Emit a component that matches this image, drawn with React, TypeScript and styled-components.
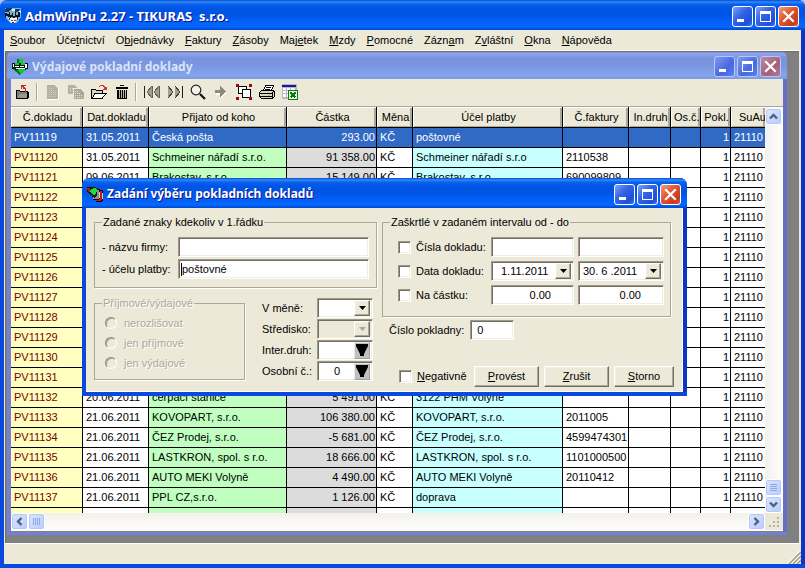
import React from "react";
import styled, { createGlobalStyle, css } from "styled-components";

const Global = createGlobalStyle`
  *, *::before, *::after { box-sizing: border-box; }
  body { margin: 0; background: #a9c4e8; overflow: hidden; }
  body, button, input, select, table { font: 11px/13px "Liberation Sans", Arial, sans-serif; color: #000; }
  button { padding: 0; margin: 0; border: 0; background: none; }
  svg { display: block; }
`;

const sunken = css`
  border: 1px solid;
  border-color: #9d9a8b #fff #fff #9d9a8b;
  box-shadow: inset 1px 1px 0 #716f64, inset -1px -1px 0 #f1efe2;
`;
const raised = css`
  border: 1px solid;
  border-color: #fff #716f64 #716f64 #fff;
  box-shadow: inset -1px -1px 0 #aca899, inset 1px 1px 0 #f1efe2;
`;

/* ---------- window frames ---------- */
const AppWindow = styled.div`
  position: relative;
  display: flex;
  flex-direction: column;
  height: 100vh;
  padding: 0 4px 4px;
  border-radius: 7px 7px 0 0;
  background: #ece9d8;
  background-clip: content-box;
  box-shadow: inset 4px -4px 0 #0a49dd, inset -4px 0 0 #0a35c8;
  overflow: hidden;
`;

const TitleBar = styled.header<{ $tone: "active" | "inactive"; $h: number }>`
  display: flex;
  align-items: center;
  gap: 4px;
  flex: none;
  height: ${(p) => p.$h}px;
  margin: 0 -4px;
  padding: 2px 6px 0 5px;
  background: ${(p) =>
    p.$tone === "active"
      ? "linear-gradient(#0848c8 0, #2f8cfc 2px, #0c62ee 4px, #0055e5 8px, #0054e3 14px, #0260f8 22px, #0468fe 27px, #0044cc 100%)"
      : "linear-gradient(#7f93e0 0, #8ea4ec 2px, #7a92dd 6px, #7b96e1 14px, #82a5ec 23px, #7f9ae4 100%)"};
`;

const TitleText = styled.h1<{ $dim?: boolean; $size: number }>`
  flex: 1;
  margin: 0;
  font: bold ${(p) => p.$size}px/20px "Noto Sans", "Open Sans", sans-serif;
  white-space: pre;
  color: ${(p) => (p.$dim ? "#d8e4f8" : "#fff")};
  text-shadow: ${(p) => (p.$dim ? "none" : "1px 1px 0 #0f1089")};
`;

const CaptionGroup = styled.div`
  display: flex;
  gap: 2px;
`;

const CaptionButton = styled.button<{ $close?: boolean; $dim?: boolean }>`
  width: 21px;
  height: 21px;
  border: 1px solid ${(p) => (p.$dim ? "#b8c8f4" : "#fff")};
  border-radius: 3px;
  background: ${(p) =>
    p.$close
      ? p.$dim
        ? "linear-gradient(135deg, #b88aa6, #a8607a 60%, #b07890)"
        : "linear-gradient(135deg, #f0a088 0, #e25a34 40%, #c8391a 80%, #d8603a 100%)"
      : p.$dim
        ? "linear-gradient(135deg, #7c9af0, #4868e0 60%, #5a80ee)"
        : "linear-gradient(135deg, #7ca4f8 0, #3664e8 40%, #1f4fd8 80%, #3a78f0 100%)"};
`;

function Caption({ dim }: { dim?: boolean }) {
  return (
    <CaptionGroup>
      <CaptionButton type="button" $dim={dim} aria-label="Minimalizovat">
        <svg width="19" height="19"><path d="M4 12h7v3H4z" fill="#fff" /></svg>
      </CaptionButton>
      <CaptionButton type="button" $dim={dim} aria-label="Maximalizovat">
        <svg width="19" height="19"><path fillRule="evenodd" d="M4 4h11v11H4zM5 7h9v7H5z" fill="#fff" /></svg>
      </CaptionButton>
      <CaptionButton type="button" $dim={dim} $close aria-label="Zavřít">
        <svg width="19" height="19"><path d="M5 5l9 9M14 5l-9 9" stroke="#fff" strokeWidth="2.2" strokeLinecap="square" /></svg>
      </CaptionButton>
    </CaptionGroup>
  );
}

/* ---------- menu, client area, status ---------- */
const MenuBar = styled.nav`
  display: flex;
  flex: none;
  height: 21px;
  padding-left: 1px;
  border-bottom: 1px solid #fff;
`;
const MenuItem = styled.button`
  padding: 0 6px 0 5px;
`;

const Client = styled.main`
  flex: 1;
  min-height: 0;
  display: flex;
  margin: 0 2px 0 1px;
  padding: 0 12px 8px 1px;
  border: 1px solid #716f64;
  border-right: 0;
  border-bottom: 0;
  background: #808080;
`;

const StatusBar = styled.footer`
  display: flex;
  justify-content: flex-end;
  align-items: flex-end;
  flex: none;
  height: 21px;
  border-top: 1px solid #fff;
`;

const ChildWindow = styled.section`
  flex: 1;
  min-width: 0;
  display: flex;
  flex-direction: column;
  padding: 0 4px 4px;
  border-radius: 5px 5px 0 0;
  background: #ece9d8;
  background-clip: content-box;
  box-shadow: inset 4px -3px 0 #7480d4, inset -4px 0 0 #6470c8;
  overflow: hidden;
`;

const Toolbar = styled.div`
  display: flex;
  align-items: center;
  flex: none;
  height: 28px;
  padding-bottom: 1px;
  border-bottom: 1px solid #aca899;
`;
const ToolButton = styled.button`
  display: grid;
  place-items: center;
  width: 23px;
  height: 24px;
`;
const Divider = styled.span`
  width: 2px;
  height: 18px;
  margin: 0 3px 0 2px;
  border-left: 1px solid #aca899;
  border-right: 1px solid #fff;
`;

/* ---------- grid ---------- */
const GridArea = styled.div`
  flex: 1;
  min-height: 0;
  display: flex;
`;
const GridView = styled.div`
  flex: 1;
  min-width: 0;
  overflow: hidden;
  background: #fff;
`;
const Table = styled.table`
  width: 100%;
  min-width: 754px;
  table-layout: fixed;
  border-collapse: separate;
  border-spacing: 0;
`;
const Col = styled.col<{ $w?: number }>`
  width: ${(p) => (p.$w ? `${p.$w}px` : "auto")};
`;
const HeadCell = styled.th<{ $last?: boolean }>`
  height: 21px;
  padding: 0 1px 0 ${(p) => (p.$last ? 8 : 3)}px;
  font-weight: normal;
  white-space: nowrap;
  overflow: hidden;
  text-align: ${(p) => (p.$last ? "left" : "center")};
  background: #ece9d8;
  border-right: ${(p) => (p.$last ? 0 : 1)}px solid #000;
  border-bottom: 1px solid #000;
  box-shadow: inset 1px 1px 0 #fff, inset -2px -1px 0 #aca899;
`;
const Row = styled.tr<{ $selected?: boolean }>`
  ${(p) =>
    p.$selected &&
    css`
      && td { background: #316ac5; color: #fff; }
    `}
`;
const Cell = styled.td<{ $bg?: string; $ink?: string; $right?: boolean; $last?: boolean }>`
  height: 20px;
  padding: 0 1px 0 3px;
  white-space: nowrap;
  overflow: hidden;
  text-align: ${(p) => (p.$right ? "right" : "left")};
  background: ${(p) => p.$bg ?? "#fff"};
  color: ${(p) => p.$ink ?? "#000"};
  border-right: ${(p) => (p.$last ? 0 : 1)}px solid #000;
  border-bottom: 1px solid #000;
`;

const VScroll = styled.div`
  display: flex;
  flex-direction: column;
  flex: none;
  width: 18px;
  padding: 1px 1px 0 0;
  background: linear-gradient(90deg, #f3f1ec, #fefefb);
`;
const HScroll = styled.div`
  display: flex;
  flex: none;
  height: 18px;
  padding: 0 0 1px;
  background: linear-gradient(#f3f1ec, #fefefb);
`;
const Gap = styled.span`
  flex: 1;
`;
const ScrollButton = styled.button`
  display: grid;
  place-items: center;
  flex: none;
  width: 17px;
  height: 17px;
  border: 1px solid #fff;
  border-radius: 3px;
  background: linear-gradient(135deg, #dce6fe, #b8ccfb);
  box-shadow: inset 0 0 0 1px #b4c8f6;
`;
const SizeCorner = styled.span`
  display: grid;
  place-items: end;
  width: 18px;
  padding: 0 2px 1px 0;
  background: #ece9d8;
`;

/* ---------- dialog ---------- */
const Dialog = styled.form`
  position: absolute;
  left: 82px;
  top: 178px;
  width: 605px;
  padding: 0 4px 4px;
  border-radius: 7px 7px 0 0;
  background: #ece9d8;
  background-clip: content-box;
  box-shadow: inset 4px -4px 0 #0a49dd, inset -4px 0 0 #0a35c8;
  overflow: hidden;
`;
const DialogBody = styled.div`
  display: flex;
  gap: 5px;
  padding: 7px 8px 4px;
  border: 1px solid #fff;
  border-width: 0 1px 1px 0;
`;
const LeftColumn = styled.div`
  flex: none;
  width: 283px;
  display: flex;
  flex-direction: column;
  gap: 8px;
`;
const RightColumn = styled.div`
  flex: 1;
  min-width: 0;
  display: flex;
  flex-direction: column;
`;
const Group = styled.fieldset<{ $h: number }>`
  margin: 0;
  min-width: 0;
  height: ${(p) => p.$h}px;
  padding: 0 7px;
  border: 1px solid #aca899;
  box-shadow: 1px 1px 0 #fff;
  &:disabled { color: #aca899; text-shadow: 1px 1px 0 #fff; }
`;
const Legend = styled.legend`
  height: 15px;
  padding: 0 1px;
  line-height: 15px;
`;
const TextRows = styled.div`
  display: grid;
  row-gap: 2px;
  margin-top: 7px;
`;
const TextRow = styled.div`
  display: grid;
  grid-template-columns: 76px 1fr;
  align-items: center;
`;
const Field = styled.span<{ $w?: number; $off?: boolean }>`
  display: flex;
  align-items: center;
  width: ${(p) => (p.$w ? `${p.$w}px` : "auto")};
  height: 20px;
  padding: 2px;
  background: ${(p) => (p.$off ? "#ece9d8" : "#fff")};
  ${sunken}
`;
const TextInput = styled.input<{ $align?: "right" | "center"; $pad?: number }>`
  flex: 1;
  min-width: 0;
  width: 100%;
  height: 15px;
  padding: 0 ${(p) => p.$pad ?? 0}px;
  border: 0;
  outline: 0;
  background: transparent;
  text-align: ${(p) => p.$align ?? "left"};
`;
const Caret = styled.span`
  width: 1px;
  height: 13px;
  background: #000;
`;
const Select = styled.select<{ $pad?: number }>`
  flex: 1;
  min-width: 0;
  height: 15px;
  padding: 0 0 0 ${(p) => p.$pad ?? 0}px;
  border: 0;
  outline: 0;
  appearance: none;
  background: transparent;
  opacity: 1;
`;
const DropArrow = styled.span`
  display: grid;
  place-items: center;
  flex: none;
  width: 16px;
  height: 16px;
  background: #ece9d8;
  ${raised}
`;
const PickButton = styled.button`
  display: grid;
  place-items: center;
  flex: none;
  width: 16px;
  height: 17px;
  background: #c0c0c0;
  border: 1px solid;
  border-color: #e8e8e8 #a0a0a0 #a0a0a0 #e8e8e8;
`;
const LowerRow = styled.div`
  display: flex;
  gap: 17px;
  align-items: flex-start;
`;
const RadioList = styled.div`
  margin-top: 2px;
`;
const RadioLine = styled.label`
  display: flex;
  align-items: center;
  gap: 6px;
  height: 20px;
  padding-left: 3px;
`;
const Radio = styled.input`
  appearance: none;
  width: 12px;
  height: 12px;
  margin: 0 1px 0 0;
  border: 1px solid;
  border-color: #8a887a #fff #fff #8a887a;
  border-radius: 50%;
  box-shadow: inset 1px 1px 0 #aca899;
`;
const OptionGrid = styled.div`
  display: grid;
  grid-template-columns: 55px 56px;
  grid-auto-rows: 20px;
  row-gap: 1px;
  align-items: center;
  margin-top: 2px;
  white-space: nowrap;
`;
const RangeGrid = styled.div`
  display: grid;
  grid-template-columns: 89px 83px 86px;
  column-gap: 4px;
  row-gap: 4px;
  margin: 7px 0 0 8px;
`;
const CheckLine = styled.label<{ $w?: number }>`
  display: flex;
  align-items: center;
  gap: 5px;
  width: ${(p) => (p.$w ? `${p.$w}px` : "auto")};
  white-space: nowrap;
`;
const Check = styled.input`
  appearance: none;
  width: 13px;
  height: 13px;
  margin: 0;
  background: #fff;
  ${sunken}
`;
const NumberLine = styled.div`
  display: flex;
  align-items: center;
  gap: 6px;
  padding: 3px 0 0 7px;
`;
const Actions = styled.div`
  display: flex;
  align-items: center;
  gap: 5px;
  margin-top: 26px;
  padding-left: 17px;
`;
const PushButton = styled.button<{ $w: number }>`
  flex: none;
  width: ${(p) => p.$w}px;
  height: 21px;
  background: #ece9d8;
  ${raised}
`;

/* ---------- icons ---------- */
const Icon = ({ children }: { children: React.ReactNode }) => (
  <svg width="16" height="16" viewBox="0 0 16 16" shapeRendering="crispEdges" fill="none">{children}</svg>
);

const AppIcon = () => (
  <Icon>
    <path d="M0 0h16v9l-4 6H5L1 10z" fill="#7ab4d4" />
    <path d="M1 0h6l-4 4H0V1zM10 1h5l-2 3h-3z" fill="#123a68" />
    <path d="M7 1h3v2H7zM14 3h2v2h-2z" fill="#e8f4fa" />
    <path d="M0 5h2v1h2V4h1v3h2V5h1v3h2V4h1v3h2V4h2v5h-2v1h-1V9h-2v2H8V9H6v2H5V9H3V8H1v1H0z" fill="#10141c" />
    <path d="M3 10h10l-3 5H6z" fill="#eef4f6" />
    <path d="M6 12h2v1H6zM9 12h2v1H9z" fill="#b03028" />
    <path d="M4 10h1v2H4zM12 10h1v2h-1zM7 14h2v1H7z" fill="#303840" />
  </Icon>
);
const DocIcon = () => (
  <Icon>
    <path d="M5 0h6v4h5v6l-4 2-4 4-4-3-4-3V4h5z" fill="#14c83c" />
    <path d="M5 0h2v4H5zM1 10h3l4 4v2l-4-3z" fill="#087820" />
    <path d="M0 4h3v2h4V4h2v2h4V4h3v6h-2v1h-1v-1H6v1H3v-1H0z" fill="#101810" />
    <path d="M1 5h1v3H1zM3 7h4v1H3zM8 7h4v1H8zM13 5h2v4h-2zM4 9h9v1H4z" fill="#fff" />
  </Icon>
);
const CardsIcon = () => (
  <Icon>
    <path d="M7 4h9v11l-2 1H9z" fill="#200" />
    <path d="M8 5h7v9l-2 1H9z" fill="#c81818" />
    <path d="M4 3h9v10l-2 1H6z" fill="#100" />
    <path d="M5 4h7v8l-1 1H6z" fill="#909090" />
    <path d="M0 1h9l1 2v7l-3 2-3-3-4-3z" fill="#181818" />
    <path d="M0 2h3v4H1z" fill="#b81818" />
    <path d="M4 3l4-1 2 2-1 4-3 1-3-3z" fill="#18e030" />
    <path d="M12 6h1v6h-1zM15 7h1v6h-1z" fill="#c8c8c8" />
  </Icon>
);

const toolIcons: Record<string, React.ReactNode> = {
  exit: (
    <Icon>
      <path d="M1.5 14.5v-8h3l1 1h7v7z" fill="#808078" stroke="#000" />
      <path d="M3 14l2-4h7v4z" fill="#9a9a92" />
      <path d="M13 8h1v6h-1z" fill="#000" />
      <path d="M6 1h5v1H9v1h1v1h1v4h-1V5H8V3H7v2H6z" fill="#d02020" />
    </Icon>
  ),
  blank: (
    <Icon>
      <path d="M3 2h7l4 4v10H3z" fill="#fff" />
      <path d="M2 1h7l4 4v10H2z" fill="#b4b1a3" />
      <path d="M4 4h4M4 6h6M4 8h7M4 10h7M4 12h7" stroke="#cfccbe" strokeDasharray="1 1" />
    </Icon>
  ),
  copy: (
    <Icon>
      <path d="M0 1h6l3 3v6H0z" fill="#b4b1a3" />
      <path d="M5 4h7l4 4v7H5z" fill="#aba898" stroke="#ece9d8" />
      <path d="M7 7h3M7 9h6M7 11h7M7 13h7M2 4h3M2 6h2" stroke="#e4e1d2" strokeDasharray="1 1" />
    </Icon>
  ),
  open: (
    <Icon>
      <path d="M.5 14.5v-9h4l1 1h6v3" fill="#d8d4c0" stroke="#000" />
      <path d="M1 14.5l3-5h11l-4 5z" fill="#fff" stroke="#000" />
      <path d="M8 2h1V1h4v1h1v1h2v3h-4V5h1V3h-1V2H9v1H8z" fill="#e03030" />
    </Icon>
  ),
  trash: (
    <Icon>
      <path d="M2 3h12v2H2zM6 1h4v1H6zM3 6h10v9H3z" fill="#000" />
      <path d="M5 6h1v8H5zM7 6h1v8H7zM9 6h1v8H9zM11 6h1v8h-1z" fill="#b8b5a6" />
    </Icon>
  ),
  first: (
    <Icon>
      <path d="M0 2h1v12H0z" fill="#202020" />
      <path d="M8 2v12L3 8zM15 2v12l-5-6z" fill="#a3a090" />
      <path d="M8.5 2v12M15.5 2v12M8 2L3 8l5 6M15 2l-5 6 5 6" stroke="#606058" />
    </Icon>
  ),
  last: (
    <Icon>
      <path d="M15 2h1v12h-1z" fill="#202020" />
      <path d="M1 2v12l5-6zM8 2v12l5-6z" fill="#a3a090" />
      <path d="M1 2l5 6-5 6M8 2l5 6-5 6" stroke="#404038" />
    </Icon>
  ),
  find: (
    <svg width="16" height="16" viewBox="0 0 16 16" fill="none">
      <circle cx="6" cy="6" r="4.8" fill="#f4f3e8" stroke="#222" strokeWidth="1.2" />
      <path d="M10 10l5 5" stroke="#111" strokeWidth="2.2" />
    </svg>
  ),
  next: (
    <Icon>
      <path d="M3 7h5V4l6 5-6 5v-3H3z" fill="#fff" />
      <path d="M2 6h5V2h1l5 5.5L8 13H7V9H2z" fill="#8c8a7c" />
    </Icon>
  ),
  group: (
    <Icon>
      <path d="M2.5 2.5h8v7h-8z" fill="#fff" stroke="#000" />
      <path d="M6.5 5.5h8v8h-8z" fill="#fff" stroke="#000" />
      <path d="M0 0h3v3H0zM13 0h3v3h-3zM0 13h3v3H0zM13 13h3v3h-3z" fill="#8c1010" />
    </Icon>
  ),
  print: (
    <Icon>
      <path d="M4.5 6.5l2-5h8l-2 5z" fill="#fff" stroke="#000" />
      <path d="M7 3.5h5M6 5.5h5" stroke="#000" />
      <path d="M.5 8.5l2-2h11l2 1v5l-2 2h-11l-2-2z" fill="#d8d5c8" stroke="#000" />
      <path d="M1 9.5h12M1 12.5h12M13.5 8v6" stroke="#000" />
      <path d="M9 11h2v1H9z" fill="#d8c820" />
    </Icon>
  ),
  excel: (
    <Icon>
      <path d="M0 0h15v15H0z" fill="#b8b8c0" />
      <path d="M0 1h14v2H0z" fill="#1818a0" />
      <path d="M1 4h3v2H1zM5 4h3v2H5zM9 4h4v2H9zM1 7h3v2H1zM5 7h2v2H5zM1 10h3v3H1zM5 10h1v3H5z" fill="#fff" />
      <path d="M6.5 6.5h9v9h-9z" fill="#e8f8e8" stroke="#107810" />
      <path d="M8.5 8.5l5 5M13.5 8.5l-5 5" stroke="#107810" strokeWidth="1.6" />
    </Icon>
  ),
};

const Down = ({ off }: { off?: boolean }) => (
  <svg width="7" height="4"><path d="M0 0h7L3.5 4z" fill={off ? "#aca899" : "#000"} /></svg>
);
const BigDown = () => (
  <svg width="12" height="12"><path d="M0 0h12v2L8 10v2H4v-2L0 2z" fill="#000" /></svg>
);
const Chevron = ({ d }: { d: string }) => (
  <svg width="9" height="9" fill="none"><path d={d} stroke="#4d6185" strokeWidth="2.4" /></svg>
);

/* ---------- data ---------- */
const menu: [string, number][] = [
  ["Soubor", 0], ["Účetnictví", 3], ["Objednávky", 1], ["Faktury", 0], ["Zásoby", 0], ["Majetek", 3],
  ["Mzdy", 0], ["Pomocné", 0], ["Záznam", 4], ["Zvláštní", 1], ["Okna", 0], ["Nápověda", 0],
];
const Mnemonic = ({ text, at }: { text: string; at: number }) => (
  <>{text.slice(0, at)}<u>{text[at]}</u>{text.slice(at + 1)}</>
);

const tools: { id: string; label: string }[][] = [
  [{ id: "exit", label: "Konec" }],
  [{ id: "blank", label: "Nový" }, { id: "copy", label: "Kopie" }, { id: "open", label: "Otevřít" }, { id: "trash", label: "Smazat" }],
  [
    { id: "first", label: "První" }, { id: "last", label: "Poslední" }, { id: "find", label: "Hledat" },
    { id: "next", label: "Další" }, { id: "group", label: "Výběr" }, { id: "print", label: "Tisk" }, { id: "excel", label: "Excel" },
  ],
];

const columns: [string, number?][] = [
  ["Č.dokladu", 72], ["Dat.dokladu", 66], ["Přijato od koho", 138], ["Částka", 90], ["Měna", 36],
  ["Účel platby", 150], ["Č.faktury", 66], ["In.druh", 42], ["Os.č.", 30], ["Pokl.", 30], ["SuAu"],
];

type Entry = { date: string; payee: string; sum: string; purpose: string; invoice?: string };
const entries: Record<number, Entry> = {
  11119: { date: "31.05.2011", payee: "Česká pošta", sum: "293.00", purpose: "poštovné" },
  11120: { date: "31.05.2011", payee: "Schmeiner nářadí s.r.o.", sum: "91 358.00", purpose: "Schmeiner nářadí s.r.o", invoice: "2110538" },
  11121: { date: "09.06.2011", payee: "Brakostav, s.r.o.", sum: "15 149.00", purpose: "Brakostav, s.r.o.", invoice: "690099809" },
  11132: { date: "20.06.2011", payee: "čerpací stanice", sum: "5 491.00", purpose: "3122 PHM Volyně" },
  11133: { date: "21.06.2011", payee: "KOVOPART, s.r.o.", sum: "106 380.00", purpose: "KOVOPART, s.r.o.", invoice: "2011005" },
  11134: { date: "21.06.2011", payee: "ČEZ Prodej, s.r.o.", sum: "-5 681.00", purpose: "ČEZ Prodej, s.r.o.", invoice: "4599474301" },
  11135: { date: "21.06.2011", payee: "LASTKRON, spol. s r.o.", sum: "18 666.00", purpose: "LASTKRON, spol. s r.o.", invoice: "1101000500" },
  11136: { date: "21.06.2011", payee: "AUTO MEKI Volyně", sum: "4 490.00", purpose: "AUTO MEKI Volyně", invoice: "20110412" },
  11137: { date: "21.06.2011", payee: "PPL CZ,s.r.o.", sum: "1 126.00", purpose: "doprava" },
};
const rows = Array.from({ length: 20 }, (_, i) => 11119 + i);

function DocumentTable() {
  return (
    <Table>
      <colgroup>{columns.map(([name, w]) => <Col key={name} $w={w} />)}</colgroup>
      <thead>
        <tr>{columns.map(([name, w]) => <HeadCell key={name} $last={!w}>{name}</HeadCell>)}</tr>
      </thead>
      <tbody>
        {rows.map((n) => {
          const e = entries[n];
          const shown = n < 11138;
          return (
            <Row key={n} $selected={n === 11119}>
              <Cell $bg="#ffffc0" $ink={n === 11119 ? "#fff" : "#780000"}>{shown && `PV${n}`}</Cell>
              <Cell>{e?.date}</Cell>
              <Cell $bg="#c0ffc0">{e?.payee}</Cell>
              <Cell $bg="#dcdcdc" $right>{e?.sum}</Cell>
              <Cell>{e && "KČ"}</Cell>
              <Cell $bg="#c8ffff">{e?.purpose}</Cell>
              <Cell>{e?.invoice}</Cell>
              <Cell />
              <Cell />
              <Cell $right>{shown && "1"}</Cell>
              <Cell $last>{shown && "21110"}</Cell>
            </Row>
          );
        })}
      </tbody>
    </Table>
  );
}

const RadioBox = styled(Group)`
  flex: none;
  width: 151px;
`;
function RadioGroup() {
  return (
    <RadioBox $h={84} disabled>
      <Legend>Příjmové/výdajové</Legend>
      <RadioList>
        {["nerozlišovat", "jen příjmové", "jen výdajové"].map((t) => (
          <RadioLine key={t}><Radio type="radio" name="smer" />{t}</RadioLine>
        ))}
      </RadioList>
    </RadioBox>
  );
}

const RangeBox = styled(Group)`
  margin-right: 3px;
`;
function RangeGroup() {
  return (
    <RangeBox $h={102}>
      <Legend>Zaškrtlé v zadaném intervalu od - do</Legend>
      <RangeGrid>
        <CheckLine><Check type="checkbox" />Čísla dokladu:</CheckLine>
        <Field><TextInput aria-label="Číslo od" defaultValue="" /></Field>
        <Field><TextInput aria-label="Číslo do" defaultValue="" /></Field>
        <CheckLine><Check type="checkbox" />Data dokladu:</CheckLine>
        <Field><Select $pad={7} aria-label="Datum od"><option>1.11.2011</option></Select><DropArrow><Down /></DropArrow></Field>
        <Field><Select $pad={2} aria-label="Datum do"><option>30. 6 .2011</option></Select><DropArrow><Down /></DropArrow></Field>
        <CheckLine><Check type="checkbox" />Na částku:</CheckLine>
        <Field><TextInput aria-label="Částka od" $align="right" $pad={20} defaultValue="0.00" /></Field>
        <Field><TextInput aria-label="Částka do" $align="right" $pad={20} defaultValue="0.00" /></Field>
      </RangeGrid>
    </RangeBox>
  );
}

function SelectionDialog() {
  return (
    <Dialog role="dialog" aria-label="Zadání výběru pokladních dokladů" onSubmit={(e) => e.preventDefault()}>
      <TitleBar $tone="active" $h={30}>
        <CardsIcon />
        <TitleText as="h2" $size={12}>Zadání výběru pokladních dokladů</TitleText>
        <Caption />
      </TitleBar>
      <DialogBody>
        <LeftColumn>
          <Group $h={73}>
            <Legend>Zadané znaky kdekoliv v 1.řádku</Legend>
            <TextRows>
              <TextRow>
                <label htmlFor="firma">- názvu firmy:</label>
                <Field><TextInput id="firma" defaultValue="" /></Field>
              </TextRow>
              <TextRow>
                <label htmlFor="ucel">- účelu platby:</label>
                <Field><Caret /><TextInput id="ucel" defaultValue="poštovné" /></Field>
              </TextRow>
            </TextRows>
          </Group>
          <LowerRow>
            <RadioGroup />
            <OptionGrid>
              <label htmlFor="mena">V měně:</label>
              <Field><Select id="mena"><option /></Select><DropArrow><Down /></DropArrow></Field>
              <label htmlFor="stredisko">Středisko:</label>
              <Field $off><Select id="stredisko" disabled><option /></Select><DropArrow><Down off /></DropArrow></Field>
              <label htmlFor="druh">Inter.druh:</label>
              <Field><TextInput id="druh" defaultValue="" /><PickButton type="button" aria-label="Vybrat druh"><BigDown /></PickButton></Field>
              <label htmlFor="osobni">Osobní č.:</label>
              <Field><TextInput id="osobni" $align="center" defaultValue="0" /><PickButton type="button" aria-label="Vybrat číslo"><BigDown /></PickButton></Field>
            </OptionGrid>
          </LowerRow>
        </LeftColumn>
        <RightColumn>
          <RangeGroup />
          <NumberLine>
            <label htmlFor="pokladna">Číslo pokladny:</label>
            <Field $w={44}><TextInput id="pokladna" $pad={4} defaultValue="0" /></Field>
          </NumberLine>
          <Actions>
            <CheckLine $w={70}><Check type="checkbox" /><span><Mnemonic text="Negativně" at={0} /></span></CheckLine>
            <PushButton $w={65}><Mnemonic text="Provést" at={0} /></PushButton>
            <PushButton $w={65} type="button"><Mnemonic text="Zrušit" at={0} /></PushButton>
            <PushButton $w={60} type="button"><Mnemonic text="Storno" at={0} /></PushButton>
          </Actions>
        </RightColumn>
      </DialogBody>
    </Dialog>
  );
}

export default function App() {
  return (
    <>
      <Global />
      <AppWindow>
        <TitleBar $tone="active" $h={30}>
          <AppIcon />
          <TitleText $size={13}>{"AdmWinPu 2.27 - TIKURAS  s.r.o."}</TitleText>
          <Caption />
        </TitleBar>
        <MenuBar>
          {menu.map(([text, at]) => <MenuItem key={text}><Mnemonic text={text} at={at} /></MenuItem>)}
        </MenuBar>
        <Client>
          <ChildWindow>
            <TitleBar $tone="inactive" $h={27}>
              <DocIcon />
              <TitleText as="h2" $dim $size={12}>Výdajové pokladní doklady</TitleText>
              <Caption dim />
            </TitleBar>
            <Toolbar>
              {tools.map((set, i) => (
                <React.Fragment key={i}>
                  {i > 0 && <Divider />}
                  {set.map((t) => <ToolButton key={t.id} aria-label={t.label}>{toolIcons[t.id]}</ToolButton>)}
                </React.Fragment>
              ))}
            </Toolbar>
            <GridArea>
              <GridView><DocumentTable /></GridView>
              <VScroll>
                <ScrollButton aria-label="Nahoru"><Chevron d="M1 6.5L4.5 3 8 6.5" /></ScrollButton>
                <Gap />
                <ScrollButton aria-label="Posuvník svislý">
                  <svg width="7" height="8"><path d="M0 .5h7M0 2.5h7M0 4.5h7M0 6.5h7" stroke="#8ca8e8" /></svg>
                </ScrollButton>
                <ScrollButton aria-label="Dolů"><Chevron d="M1 2.5L4.5 6 8 2.5" /></ScrollButton>
              </VScroll>
            </GridArea>
            <HScroll>
              <ScrollButton aria-label="Vlevo"><Chevron d="M6.5 1L3 4.5 6.5 8" /></ScrollButton>
              <ScrollButton aria-label="Posuvník vodorovný">
                <svg width="8" height="7"><path d="M.5 0v7M2.5 0v7M4.5 0v7M6.5 0v7" stroke="#8ca8e8" /></svg>
              </ScrollButton>
              <Gap />
              <ScrollButton aria-label="Vpravo"><Chevron d="M2.5 1L6 4.5 2.5 8" /></ScrollButton>
              <SizeCorner>
                <svg width="12" height="12"><path d="M8 0h2v2H8zM4 4h2v2H4zM8 4h2v2H8zM0 8h2v2H0zM4 8h2v2H4zM8 8h2v2H8z" fill="#b8b4a2" /></svg>
              </SizeCorner>
            </HScroll>
          </ChildWindow>
        </Client>
        <StatusBar>
          <svg width="13" height="13" fill="none">
            <path d="M0 12L12 0M4 12l8-8M8 12l4-4" stroke="#fff" />
            <path d="M1 13L13 1M5 13l8-8M9 13l4-4" stroke="#a09d8c" strokeWidth="1.5" />
          </svg>
        </StatusBar>
        <SelectionDialog />
      </AppWindow>
    </>
  );
}
